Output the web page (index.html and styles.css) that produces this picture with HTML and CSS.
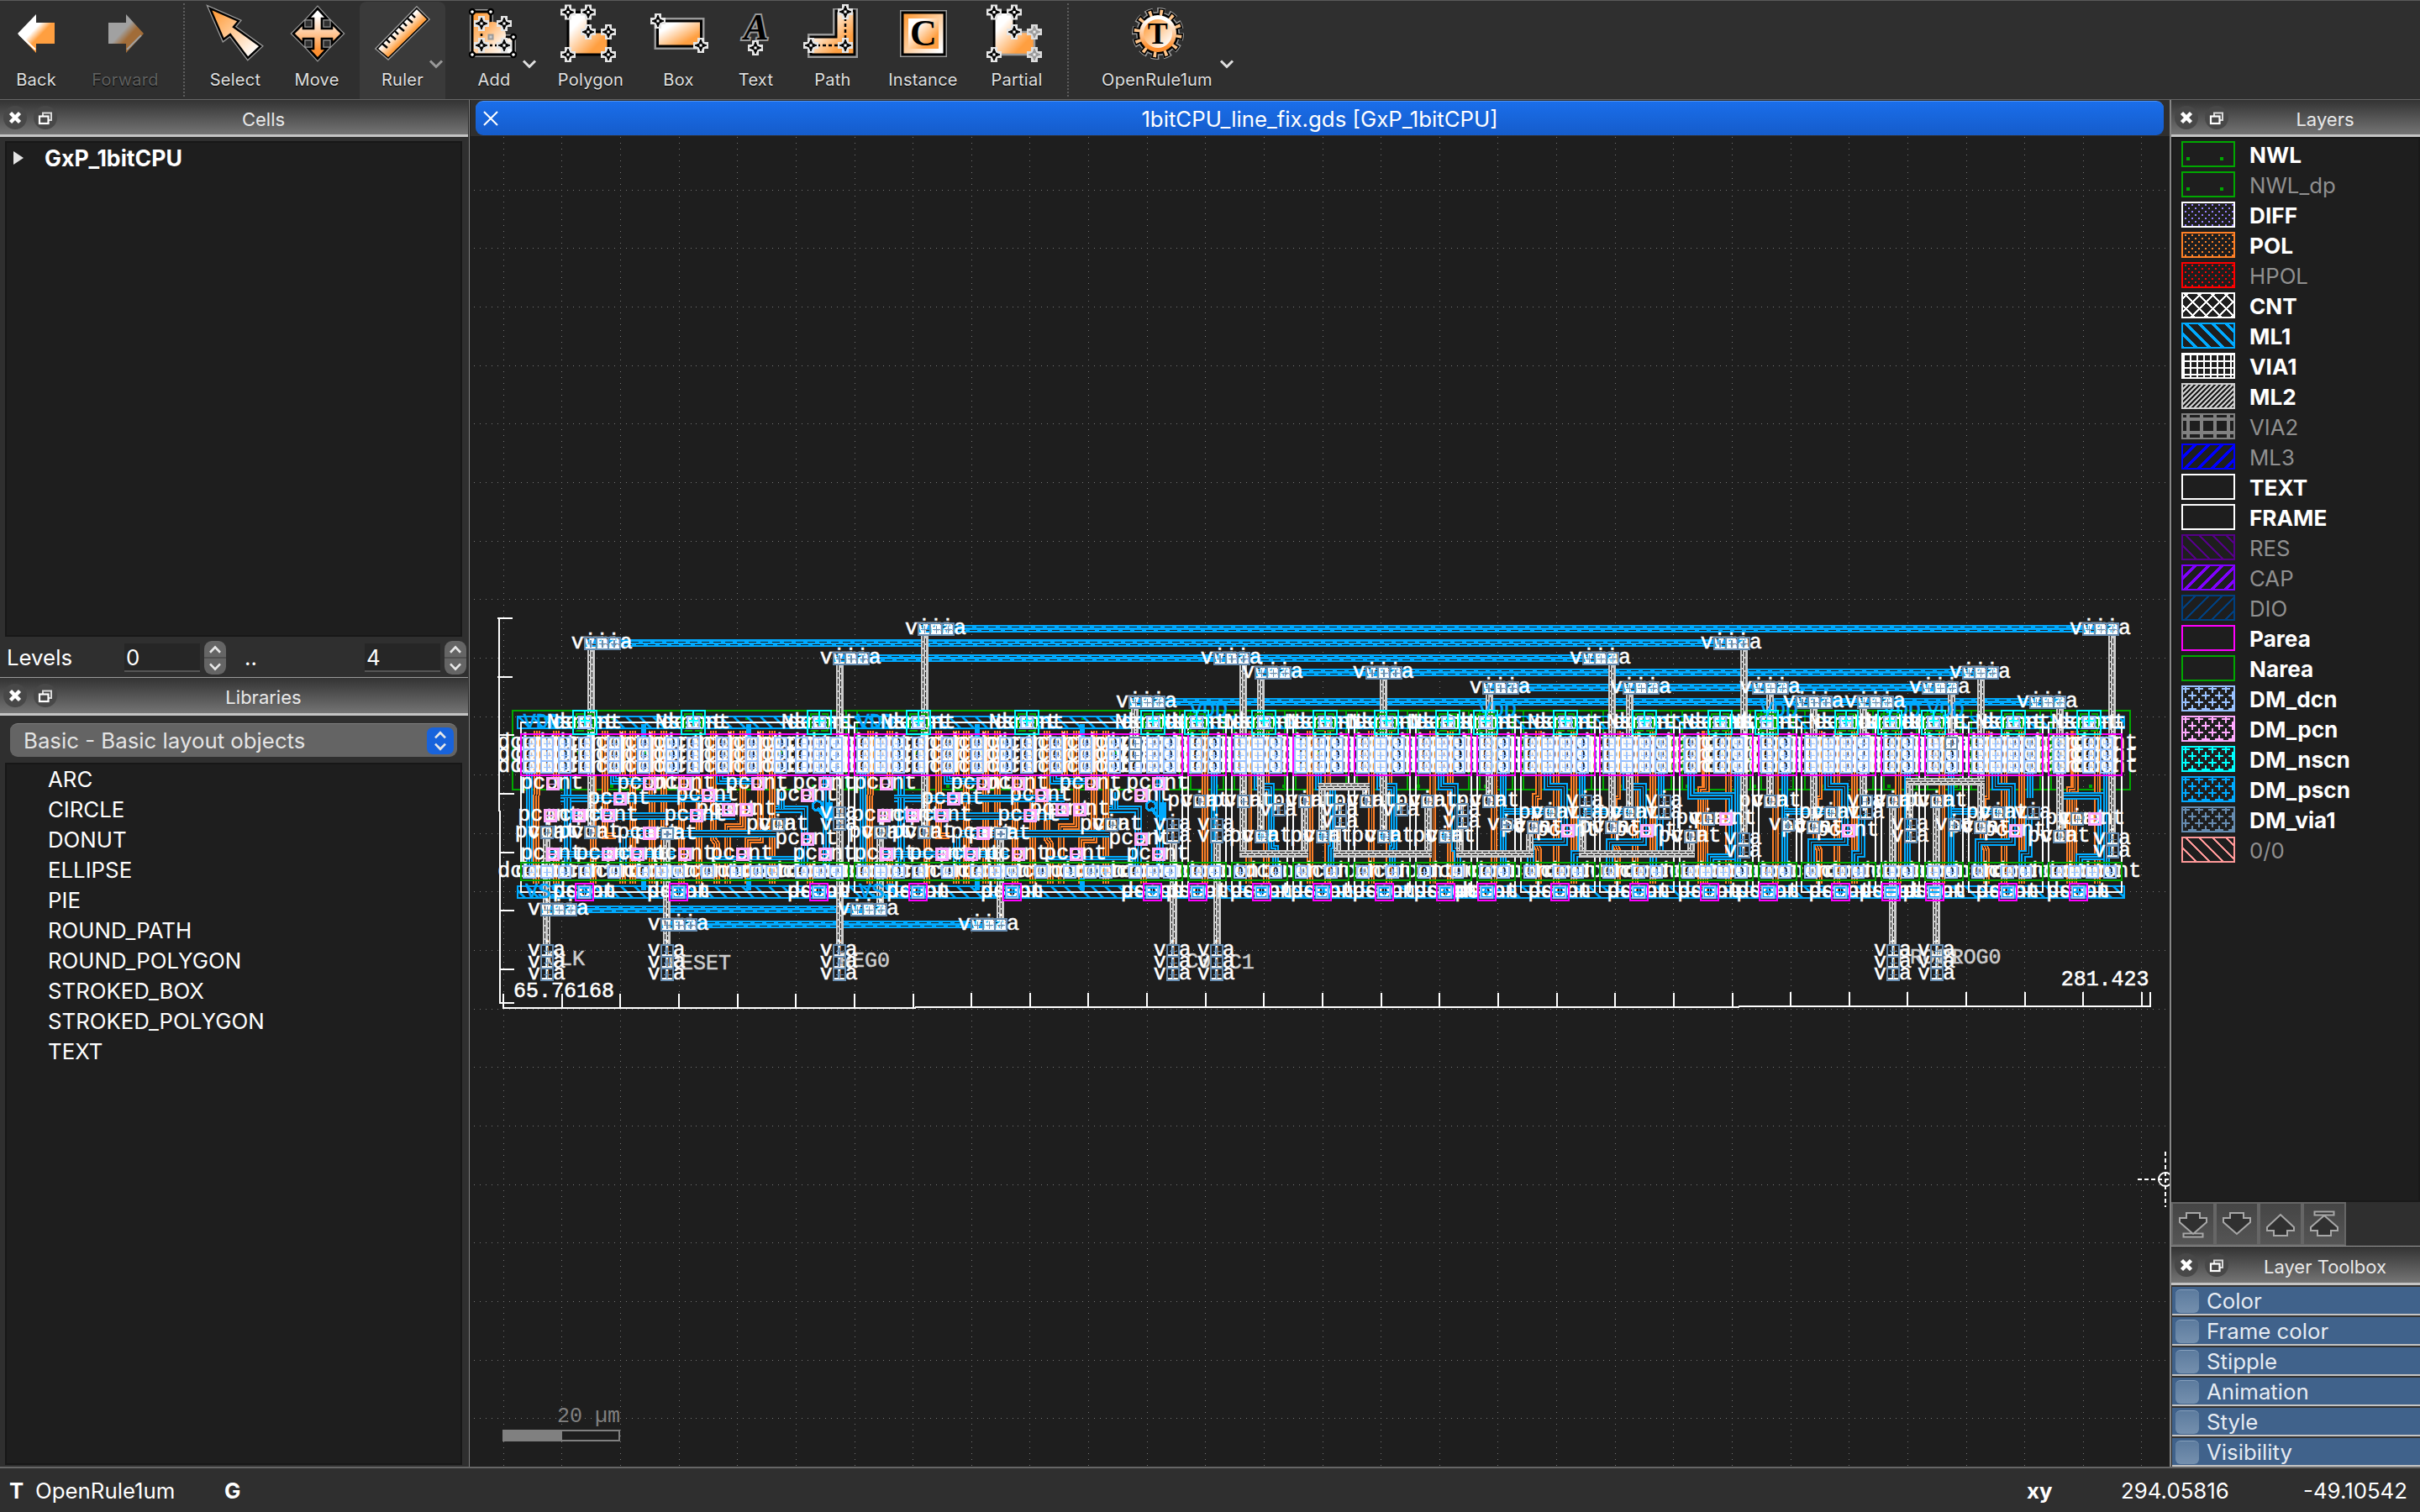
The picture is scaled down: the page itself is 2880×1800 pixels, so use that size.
FILE: index.html
```html
<!DOCTYPE html>
<html lang="en">
<head>
<meta charset="utf-8">
<title>1bitCPU_line_fix.gds</title>
<link rel="stylesheet" href="styles.css">
</head>
<body>
<svg class="defs" width="0" height="0">
  <defs>
    <linearGradient id="gd" x1="0" y1="0" x2="1" y2="1"><stop offset=".25" stop-color="#fff"/><stop offset=".75" stop-color="#ff9f40"/></linearGradient>
    <linearGradient id="gr" x1="0" y1="0" x2="1" y2="1"><stop offset=".1" stop-color="#ff9f40"/><stop offset=".9" stop-color="#fff"/></linearGradient>
    <linearGradient id="gv" x1="0" y1="0" x2="0" y2="1"><stop offset=".15" stop-color="#fff"/><stop offset=".85" stop-color="#ff9030"/></linearGradient>
    <linearGradient id="gh" x1=".3" y1=".3" x2=".7" y2=".7"><stop offset=".3" stop-color="#fff"/><stop offset=".7" stop-color="#ff9f40"/></linearGradient>
    <g id="star"><path d="M-4-9H4V-4H9V4H4V9H-4V4H-9V-4H-4Z" fill="#e6e6e6"/><path d="M0-7L2-2L7 0L2 2L0 7L-2 2L-7 0L-2-2Z" fill="#000" stroke="#000"/><rect x="-1.5" y="-1.5" width="3" height="3" fill="#fff"/></g>
    <g id="stard"><path d="M-4-9H4V-4H9V4H4V9H-4V4H-9V-4H-4Z" fill="#ddd"/><path d="M0-7L2-2L7 0L2 2L0 7L-2 2L-7 0L-2-2Z" fill="#999" stroke="#999"/><rect x="-1.5" y="-1.5" width="3" height="3" fill="#eee"/></g>
    <g id="node"><circle r="3" fill="#fff" stroke="#000" stroke-width="2.4"/></g>
    <g id="dockbtns"><circle cx="14" cy="14" r="14" fill="#484848"/><path d="M8.500 8.500L19.500 19.500M19.500 8.500L8.500 19.500" stroke="#fff" stroke-width="4.500"/><circle cx="50" cy="14" r="14" fill="#484848"/><path d="M47 12V8.500H57V17H54" stroke="#d8d8d8" stroke-width="2" fill="none"/><rect x="43" y="12.500" width="10.500" height="8.500" fill="none" stroke="#fff" stroke-width="2.200"/></g>
  </defs>
</svg>
<div class="app">
  <header class="toolbar">
    <div class="tool w86"><svg class="icon" viewBox="0 0 64 64"><path d="M54 19V44H32V55L10 32L32 9V19Z" fill="url(#gh)"/><path d="M12 33L31 51" stroke="#fff" stroke-width="2"/></svg><span>Back</span></div>
    <div class="tool w126 off"><svg class="icon" viewBox="0 0 64 64"><path d="M12 19V44H33V55L54 32L33 9V19Z" fill="url(#gh)"/><path d="M51 34L34 51" stroke="#fff" stroke-width="2"/></svg><span>Forward</span></div>
    <i class="sep first"></i>
    <div class="tool w96"><svg class="icon" viewBox="0 0 64 64"><path d="M2 2L36 17L30 24L62 47L47 61L26 33L18 39Z" fill="url(#gr)" stroke="#999" stroke-width="5"/><path d="M2 2L36 17L30 24L62 47L47 61L26 33L18 39Z" fill="url(#gr)" stroke="#000" stroke-width="2.400"/></svg><span>Select</span></div>
    <div class="tool w98"><svg class="icon" viewBox="0 0 64 64"><path d="M33 2L44 14H38V26H50V20L62 32L50 44V38H38V50H44L33 62L22 50H28V38H16V44L4 32L16 20V26H28V14H22Z" fill="url(#gv)" stroke="#999" stroke-width="5"/><path d="M33 2L44 14H38V26H50V20L62 32L50 44V38H38V50H44L33 62L22 50H28V38H16V44L4 32L16 20V26H28V14H22Z" fill="url(#gv)" stroke="#000" stroke-width="2.600"/></svg><span>Move</span></div>
    <div class="tool ruler"><svg class="icon" viewBox="0 0 64 64"><path d="M49 1L63 15L15 62L1 50Z" fill="url(#gh)" stroke="#999" stroke-width="3"/><path d="M49 2L62 15L15 61L2 50Z" fill="url(#gh)" stroke="#000" stroke-width="1.600"/><path d="M8 44l6 5M13 39l4 4M18 34l6 5M23 29l4 4M28 24l6 5M33 19l4 4M38 14l6 5M43 9l4 4" stroke="#000" stroke-width="2.400"/></svg><span>Ruler</span><svg class="chev dim" viewBox="0 0 18 10"><path d="M2 1L9 8L16 1"/></svg></div>
    <div class="tool w116"><svg class="icon" viewBox="0 0 64 64"><path d="M6 6H28V36H55V57H6Z" fill="url(#gr)" stroke="#999" stroke-width="6"/><path d="M6 6H28V36H55V57H6Z" fill="url(#gr)" stroke="#000" stroke-width="3"/><circle cx="30" cy="34" r="16" fill="url(#gr)"/><path d="M17 20V46H44" stroke="#000" stroke-width="2.500" stroke-dasharray="3 3" fill="none"/><rect x="25.500" y="33.500" width="5" height="5" fill="#ccc" stroke="#999" stroke-width="2"/><use href="#node" x="6" y="6"/><use href="#node" x="28" y="6"/><use href="#node" x="55" y="36"/><use href="#node" x="6" y="57"/><use href="#node" x="55" y="57"/><use href="#star" x="17" y="20"/><use href="#star" x="44" y="20"/><use href="#star" x="17" y="46"/><use href="#star" x="44" y="46"/></svg><span>Add</span><svg class="chev" viewBox="0 0 18 10"><path d="M2 1L9 8L16 1"/></svg></div>
    <div class="tool w114"><svg class="icon" viewBox="0 0 64 64"><path d="M5 6.500H29V30H53V57H5Z" fill="url(#gd)" stroke="#000" stroke-width="3"/><use href="#star" x="5" y="6.500"/><use href="#star" x="29" y="6.500"/><use href="#star" x="29" y="30"/><use href="#star" x="53" y="30"/><use href="#star" x="5" y="57"/><use href="#star" x="53" y="57"/></svg><span>Polygon</span></div>
    <div class="tool w95"><svg class="icon" viewBox="0 0 64 64"><rect x="6.500" y="17" width="52" height="30" stroke="#999" stroke-width="8"/><rect x="6.500" y="17" width="52" height="30" fill="url(#gd)" stroke="#000" stroke-width="3"/><use href="#star" x="7" y="17"/><use href="#star" x="58" y="46"/></svg><span>Box</span></div>
    <div class="tool w89"><svg class="icon" viewBox="0 0 64 64"><text x="32" y="39" class="glyph ital">A</text><use href="#star" x="31" y="49"/></svg><span>Text</span></div>
    <div class="tool w94"><svg class="icon" viewBox="0 0 64 64"><path d="M5 35H35V5H59V58H5Z" stroke="#999" stroke-width="6"/><path d="M6 36H36V5H58V57H6Z" fill="url(#gd)" stroke="#000" stroke-width="3"/><path d="M6 46H47V6" stroke="#000" stroke-width="2.500" stroke-dasharray="4 3" fill="none"/><use href="#star" x="6" y="46"/><use href="#star" x="47" y="46"/><use href="#star" x="47" y="6"/></svg><span>Path</span></div>
    <div class="tool w121"><svg class="icon" viewBox="0 0 64 64"><rect x="5" y="5" width="54" height="54" fill="url(#gr)" stroke="#999" stroke-width="2"/><rect x="7" y="7" width="50" height="50" fill="url(#gr)" stroke="#000" stroke-width="3"/><rect x="14" y="14" width="36" height="36" fill="url(#gd)"/><text x="32" y="46" class="glyph big">C</text></svg><span>Instance</span></div>
    <div class="tool w102"><svg class="icon" viewBox="0 0 64 64"><path d="M5 6.500H29V30H53V57H5Z" fill="url(#gd)" stroke="#999" stroke-width="2.500"/><path d="M29 30V6.500H5V57" fill="none" stroke="#000" stroke-width="3"/><use href="#star" x="5" y="6.500"/><use href="#star" x="29" y="6.500"/><use href="#star" x="29" y="30"/><use href="#stard" x="53" y="30"/><use href="#star" x="5" y="57"/><use href="#stard" x="53" y="57"/></svg><span>Partial</span></div>
    <i class="sep second"></i>
    <div class="tool w166"><svg class="icon" viewBox="0 0 64 64"><circle cx="33" cy="32" r="26.500" fill="none" stroke="#999" stroke-width="9" stroke-dasharray="9 4.875" stroke-dashoffset="1.600"/><circle cx="33" cy="32" r="23" fill="#999" stroke="#999" stroke-width="6"/><circle cx="33" cy="32" r="26" fill="none" stroke="#000" stroke-width="8" stroke-dasharray="7 6.614"/><circle cx="33" cy="32" r="23" fill="#000" stroke="#000" stroke-width="3"/><circle cx="33" cy="32" r="25" fill="none" stroke="#ffc489" stroke-width="7" stroke-dasharray="3.500 9.590" stroke-dashoffset="-1.600"/><circle cx="33" cy="32" r="22" fill="url(#gv)"/><circle cx="33" cy="32" r="17" fill="url(#gr)"/><text x="33" y="44" class="glyph tee">T</text></svg><span>OpenRule1um</span><svg class="chev far" viewBox="0 0 18 10"><path d="M2 1L9 8L16 1"/></svg></div>
  </header>
  <main class="work">
    <aside class="left">
      <div class="dock"><svg class="btns" viewBox="0 0 64 28"><use href="#dockbtns"/></svg><span>Cells</span></div>
      <div class="tree"><svg width="12" height="18" viewBox="0 0 12 18"><path d="M0 1L12 9L0 17Z" fill="#e4e4e4"/></svg><b>GxP_1bitCPU</b></div>
      <div class="levels"><span class="lv">Levels</span><span class="field">0</span><svg class="step" viewBox="0 0 26 38" preserveAspectRatio="none"><rect width="26" height="38" rx="9" fill="#656565"/><path d="M0 19H26" stroke="#4c4c4c" stroke-width="1.500"/><path d="M7 13L13 7L19 13M7 26L13 32L19 26" class="arr"/></svg><span class="dots">..</span><span class="field">4</span><svg class="step" viewBox="0 0 26 38" preserveAspectRatio="none"><rect width="26" height="38" rx="9" fill="#656565"/><path d="M0 19H26" stroke="#4c4c4c" stroke-width="1.500"/><path d="M7 13L13 7L19 13M7 26L13 32L19 26" class="arr"/></svg></div>
      <div class="dock low"><svg class="btns" viewBox="0 0 64 28"><use href="#dockbtns"/></svg><span>Libraries</span></div>
      <div class="combo"><span>Basic - Basic layout objects</span><svg width="32" height="32" viewBox="0 0 32 31" preserveAspectRatio="none"><rect width="32" height="31" rx="7" fill="#1863dc"/><path d="M10 12L16 6L22 12M10 19L16 25L22 19" class="arr"/></svg></div>
      <ul class="lib"><li>ARC</li><li>CIRCLE</li><li>DONUT</li><li>ELLIPSE</li><li>PIE</li><li>ROUND_PATH</li><li>ROUND_POLYGON</li><li>STROKED_BOX</li><li>STROKED_POLYGON</li><li>TEXT</li></ul>
    </aside>
    <section class="view">
      <div class="tabs"><div class="tab"><svg width="18" height="18" viewBox="0 0 18 18"><path d="M1 1L17 17M17 1L1 17" stroke="#fff" stroke-width="2"/></svg><span>1bitCPU_line_fix.gds [GxP_1bitCPU]</span></div></div>
      <svg class="canvas" id="canvas" width="2022" height="1583" viewBox="0 0 2022 1583"></svg>
    </section>
    <aside class="right">
      <div class="dock"><svg class="btns" viewBox="0 0 64 28"><use href="#dockbtns"/></svg><span>Layers</span></div>
      <ul class="layers" id="layers"></ul>
      <div class="order">
        <button><svg viewBox="0 0 48 48"><path d="M16 11H32V17H40V22L24 36L8 22V17H16ZM12.500 35.500H35.500V39.500H12.500Z"/></svg></button>
        <button><svg viewBox="0 0 48 48"><path d="M16 11H32V17H40V22L24 36L8 22V17H16Z"/></svg></button>
        <button><svg viewBox="0 0 48 48"><path d="M16 38H32V32H40V28L24 13L8 28V32H16Z"/></svg></button>
        <button><svg viewBox="0 0 48 48"><path d="M16 38H32V32H40V28L24 14L8 28V32H16ZM12.500 9.500H35.500V13.500H12.500Z"/></svg></button>
      </div>
      <div class="dock box"><svg class="btns" viewBox="0 0 64 28"><use href="#dockbtns"/></svg><span>Layer Toolbox</span></div>
      <ul class="kit"><li><i></i>Color</li><li><i></i>Frame color</li><li><i></i>Stipple</li><li><i></i>Animation</li><li><i></i>Style</li><li><i></i>Visibility</li></ul>
    </aside>
  </main>
  <footer class="status"><b class="t">T</b><span class="tech">OpenRule1um</span><b>G</b><b class="xy">xy</b><span class="cx">294.05816</span><span class="cy">-49.10542</span></footer>
</div>
<script src="layout.js"></script>
</body>
</html>
```

FILE: styles.css
```css
* { box-sizing: border-box; }
body { margin: 0; background: #2f2f2f; font-family: Inter, "Liberation Sans", sans-serif; font-size: 25.8px; color: #fff; }
ul { list-style: none; margin: 0; padding: 0; }
.defs { position: absolute; }
.app { width: 2880px; height: 1800px; display: flex; flex-direction: column; overflow: hidden; }

.toolbar { height: 119px; flex: none; display: flex; border-top: 1px solid #5a5a5a; border-bottom: 1px solid #666; background: #2f2f2f; }
.tool { position: relative; display: flex; flex-direction: column; align-items: center; padding-top: 7px; font-size: 20px; line-height: 24px; letter-spacing: .25px; color: #e0e0e0; }
.tool span { margin-top: 11px; text-shadow: 0 1px 1px #000; }
.icon { width: 64px; height: 64px; overflow: visible; }
.off { color: #606060; }
.off .icon { opacity: .55; }
.w86 { width: 86px; } .w126 { width: 126px; } .w96 { width: 96px; } .w98 { width: 98px; }
.w116 { width: 116px; } .w114 { width: 114px; } .w95 { width: 95px; } .w89 { width: 89px; }
.w94 { width: 94px; } .w121 { width: 121px; } .w102 { width: 102px; } .w166 { width: 166px; }
.ruler { width: 102px; margin: 1px 0 0 2px; padding-top: 6px; background: #3a3a3a; border-radius: 8px 8px 0 0; }
.sep { width: 0; margin: 3px 0; border-left: 2px dotted #5c5c5c; }
.first { margin-left: 6px; margin-right: 12px; }
.second { margin-left: 9px; margin-right: 22px; }
.chev { position: absolute; right: 7px; top: 70px; width: 18px; height: 11px; fill: none; stroke: #e0e0e0; stroke-width: 3; }
.chev.dim { stroke: #999; right: 2px; top: 69px; }
.chev.far { right: -9px; }
.glyph { font-family: "Liberation Serif", serif; font-weight: bold; text-anchor: middle; fill: #000; }
.ital { font-size: 44px; font-style: italic; stroke: #999; stroke-width: 4; paint-order: stroke; }
.big { font-size: 44px; }
.tee { font-size: 36px; }

.work { flex: 1; display: flex; min-height: 0; }
.left { width: 560px; display: flex; flex-direction: column; background: #2f2f2f; border-right: 1px solid #1e1e1e; box-shadow: inset -1px 0 #808080; }
.dock { position: relative; height: 44px; flex: none; margin-right: 2px; display: flex; align-items: center; background: linear-gradient(#333, #747474); border-bottom: 3px solid #c4c4c4; font-size: 22px; color: #e8e8e8; }
.dock span { flex: 1; text-align: center; padding-top: 4px; padding-left: 2px; }
.btns { width: 64px; height: 28px; margin-left: 4px; flex: none; }
.tree { height: 590px; margin: 5px 9px 0 6px; padding: 6px 8px; display: flex; align-items: flex-start; gap: 25px; background: #1e1e1e; border: 2px solid #171717; font-size: 26.6px; line-height: 24px; }
.tree svg { margin-top: 3px; }
.levels { height: 48px; display: flex; align-items: center; padding: 1px 0 0 8px; }
.lv { width: 140px; }
.field { width: 90px; height: 34px; padding-left: 2px; line-height: 33px; background: #262626; border-bottom: 2px solid #555; }
.step { width: 26px; height: 40px; margin-left: 5px; }
.arr { fill: none; stroke: #e8e8e8; stroke-width: 2.6; }
.dots { width: 143px; margin-left: 22px; }
.low { height: 46px; border-top: 1px solid #999; }
.combo { height: 40px; margin: 9px 15px 7px 12px; padding: 0 4px 0 16px; display: flex; align-items: center; justify-content: space-between; background: #646464; border-radius: 9px; border-top: 1px solid #808080; color: #e4e4e4; }
.lib { flex: 1; margin: 0 9px 2px 6px; padding: 0 49px; background: #1e1e1e; border: 2px solid #171717; line-height: 36px; }

.view { width: 2022px; display: flex; flex-direction: column; background: #1e1e1e; }
.tabs { height: 43px; padding: 1px 7px 1px 6px; background: #2f2f2f; }
.tab { height: 41px; padding-left: 9px; display: flex; align-items: center; background: linear-gradient(#1a6eea, #155ccb); border-radius: 9px; border-top: 1px solid #4b92f5; }
.tab span { flex: 1; text-align: center; padding: 1px 27px 0 0; }
.canvas { display: block; font-family: "Liberation Mono", monospace; font-size: 75px; }
.shapes { shape-rendering: crispEdges; }

.right { width: 298px; display: flex; flex-direction: column; background: #2f2f2f; border-left: 2px solid #868686; }
.right .dock { margin-right: 0; }
.layers { flex: 1; padding: 1px 0 0 10px; background: #1e1e1e; border: 2px solid #191919; }
.layers li { height: 36px; display: flex; align-items: center; gap: 17px; color: #909090; }
.layers li.on { color: #fff; font-weight: 700; font-size: 26.2px; }
.layers svg { display: block; margin-top: -1px; }
.order { height: 53px; display: flex; border-bottom: 1px solid #999; }
.order button { width: 52px; height: 52px; padding: 0; border: 2px solid #666; background: linear-gradient(#454545, #555); }
.order svg { display: block; width: 48px; height: 48px; fill: #303030; stroke: #a8a8a8; stroke-width: 2; }
.right .box { height: 46px; }
.kit li { height: 36px; display: flex; align-items: center; gap: 9px; padding: 1px 0 0 4px; margin-left: 1px; background: #40628b; border-top: 2px solid #333; border-bottom: 2px solid #c4c4c4; color: #e6ebf2; }
.kit i { width: 28px; height: 28px; border-radius: 6px; background: linear-gradient(#5c7b9e, #7590ae); border-top: 1px solid #87a0bc; }

.status { height: 54px; flex: none; display: flex; align-items: center; padding: 1px 15px 0 11px; border-top: 2px solid #666; background: #2f2f2f; }
.t { width: 31px; }
.tech { width: 225px; }
.xy { margin-left: auto; width: 112px; }
.cx { width: 217px; }
```

FILE: layout.js
```js
// Draws the mask layout view and the layer list.
const C = { bg: '#1e1e1e', ml1: '#00aaff', ml2: '#cccccc', pol: '#ff8026', well: '#00a800', par: '#ff00ff',
  dcn: '#99c2ff', pcn: '#ffaaff', nsc: '#00ffff', via: '#668cb0' };

const rect = (x, y, w, h, s, f = 'none', sw = 6) =>
  `<rect x="${x + sw / 2}" y="${y + sw / 2}" width="${w - sw}" height="${h - sw}" stroke="${s}" stroke-width="${sw}" fill="${f}"/>`;
const fill = (x, y, w, h, f) => `<rect x="${x}" y="${y}" width="${w}" height="${h}" fill="${f}"/>`;
const line = (x1, y1, x2, y2, s, sw = 6, dash = '') =>
  `<path d="M${x1} ${y1}L${x2} ${y2}" stroke="${s}" stroke-width="${sw}" ${dash ? `stroke-dasharray="${dash}"` : ''}/>`;
const label = (x, y, t, c = '#fff') => `<text x="${x}" y="${y}" fill="${c}" stroke="${c}" stroke-width="1.6">${t}</text>`;

// Cells: [left, right, top contacts, bottom contacts, n-tap x, p-tap x]
const ffTop = [180, 243, 306, 378, 484, 588, 690, 765, 870, 975, 1077, 1152, 1215, 1275];
const ffBot = [180, 243, 306, 378, 484, 585, 651, 711, 816, 918, 990, 1047, 1152, 1215, 1275];
const shift = (a, d) => a.map(v => v + d);
const gates = [
  [2532, 2667, [2560, 2625], [2562, 2625], [2518], [2532]],
  [2688, 2886, [2718, 2781, 2844], [2718, 2844], [2758], [2760]],
  [2907, 3105, [2934, 3000, 3063], [2937, 3042], [2977], [2977]],
  [3126, 3324, [3156, 3219, 3282], [3156, 3261], [3196], [3198]],
  [3345, 3543, [3375, 3438, 3500], [3375, 3494], [3415], [3417]],
  [3564, 3699, [3594, 3657], [3594, 3657], [3550], [3564]],
  [3720, 3985, [3753, 3816, 3879, 3939], [3753, 3858, 3921], [3835], [3825]],
  [4002, 4267, [4035, 4098, 4161, 4221], [4035, 4140, 4203], [4117], [4107]],
  [4287, 4548, [4326, 4431, 4494], [4317, 4380, 4443, 4506], [4387], [4359]],
  [4569, 4704, [4599, 4662], [4599, 4662], [4554], [4569]],
  [4722, 4987, [4755, 4818, 4881, 4941], [4755, 4860, 4923], [4838], [4827]],
  [5007, 5142, [5037, 5100], [5037, 5100], [4993], [5007]],
  [5163, 5298, [5193, 5256], [5193, 5256], [5149], [5163]],
  [5319, 5583, [5352, 5415, 5478, 5538], [5352, 5457, 5520], [5434], [5424]],
  [5604, 5865, [5643, 5748, 5811], [5634, 5697, 5760, 5823], [5704], [5676]],
];
const cells = [
  [150, 1320, ffTop, ffBot, [334, 721, 1171], [343, 679, 1180]],
  [1341, 2511, shift(ffTop, 1191), shift(ffBot, 1191), [1525, 1912, 2362], [1534, 1870, 2371]],
  ...gates,
];

const viaRows = [[375, 144], [1263, 198], [1567, 93], [2320, 354], [2622, 198], [2770, 249], [3165, 249], [3582, 303],
  [3940, 198], [4084, 303], [4407, 144], [4546, 303], [4701, 354], [4921, 354], [5152, 303], [5296, 249], [5536, 354],
  [5725, 93], [220, 1095], [648, 1149], [1327, 1095], [1756, 1149]];
const wires = [[1567, 5855, 102], [375, 4530, 154], [1263, 4060, 207], [2770, 5420, 258], [3582, 5280, 312],
  [2320, 5660, 363], [220, 1457, 1104], [648, 1886, 1158]];

const pcFF = [[240, 646], [585, 646], [711, 646], [972, 646], [1212, 646], [480, 699], [795, 687], [1149, 687], [867, 738],
  [930, 738], [231, 759], [333, 759], [438, 759], [753, 759], [585, 823], [1149, 843], [240, 897], [438, 897], [543, 897],
  [711, 897], [918, 897], [1212, 897]];
const pc = [...pcFF, ...pcFF.map(([x, y]) => [x + 1191, y]), [3865, 813], [4146, 813], [4428, 771], [4866, 813], [5463, 813], [5745, 771]];
// Vias sitting on a poly contact
const viaPc = [[220, 820], [375, 820], [648, 824], [1045, 792], [1411, 820], [1566, 820], [1839, 824], [2236, 792],
  [2550, 708], [2706, 708], [2925, 708], [2770, 834], [2988, 834], [3144, 708], [3364, 708], [3582, 708], [3207, 834],
  [3426, 834], [3740, 801], [3802, 750], [4020, 801], [4084, 750], [4302, 834], [4365, 771], [4588, 708], [4741, 801],
  [4804, 750], [5026, 708], [5182, 708], [5338, 801], [5401, 750], [5620, 834], [5683, 771]];
const viaOnly = [[1263, 750], [1263, 791], [2320, 501], [2320, 543], [2454, 791], [2454, 834], [2610, 791], [2610, 834],
  [2832, 739], [3052, 739], [3052, 783], [3270, 739], [3488, 739], [3488, 783], [3645, 791], [3927, 708], [3927, 750],
  [4209, 708], [4209, 750], [4491, 843], [4491, 888], [4650, 792], [4930, 708], [4930, 750], [5088, 792], [5088, 834],
  [5244, 792], [5526, 750], [5809, 843], [5809, 888], [5232, 501]];
for (const x of [220, 648, 1263, 2454, 2610, 5026, 5182]) for (const y of [1242, 1284, 1326]) viaOnly.push([x, y]);

const ml2v = [[400, 190, 820], [1288, 245, 1245], [242, 867, 1245], [670, 870, 1245], [1432, 867, 1100], [1591, 140, 820],
  [2341, 400, 500], [2728, 245, 920], [2791, 295, 835], [1861, 870, 1150], [2479, 880, 1245], [2635, 880, 1245],
  [2949, 755, 920], [3010, 680, 835], [3167, 680, 710], [3229, 295, 835], [3607, 350, 710], [3065, 830, 920],
  [3388, 755, 920], [3502, 830, 920], [3752, 848, 920], [4045, 245, 800], [4108, 350, 750], [3940, 797, 920],
  [4327, 880, 920], [4516, 190, 845], [4610, 350, 710], [4765, 400, 800], [4942, 400, 710], [5258, 350, 500],
  [5363, 295, 800], [5108, 660, 795], [5047, 755, 1245], [5203, 755, 1245], [5644, 400, 835], [5830, 140, 845]];
const ml2h = [[2715, 2960, 906], [2997, 3180, 666], [3052, 3401, 906], [3490, 3765, 906], [3927, 4340, 906], [5095, 5375, 648]];

const polFF = ['M208 480V700L205 712V1025', 'M277 480V650', 'M451 480V855H490', 'M514 480V640', 'M408 640V1025', 'M550 480V1025',
  'M619 480V1025', 'M661 480V1025', 'M724 640V1025', 'M787 640V1025', 'M838 480V868L850 885V1025', 'M901 480V640',
  'M943 480V822H887V1025', 'M1006 480V870H960V1025', 'M1048 480V1025', 'M514 930V1025', 'M277 930V1025', 'M1182 950V1025'];
const ml1FF = ['M180 620V960', 'M316 640V965', 'M480 640V660H600', 'M292 721H900', 'M300 785H915', 'M530 848H1060', 'M515 848V960',
  'M860 640V660H985', 'M1060 760H1163V940H830', 'M240 921H700', 'M1240 640V965', 'M1152 900V965', 'M1080 700V760', 'M316 721V800'];

let g = '';
// Wire drawn as two edges with a thin core line
const bus = (d, c, w = 24) => `<path d="${d}" fill="none" stroke="${c}" stroke-width="${w}"/><path d="${d}" fill="none" stroke="${C.bg}" stroke-width="${w - 12}"/><path d="${d}" fill="none" stroke="${c}" stroke-width="5"/>`;

// Wells and rails
for (const [l, r] of cells) g += rect(l - 33, 405, r - l + 66, 287, C.well);
for (let x = 230; x < 5640; x += 240) g += fill(x, 432, 12, 10, C.well) + fill(x + 120, 552, 12, 12, C.well) + fill(x + 238, 672, 12, 12, C.well);
for (const y of [427, 1033]) g += rect(136, y, 5741, 46, C.ml1, 'url(#hatch)');

for (const dx of [0, 1191]) g += `<g transform="translate(${dx} 0)">` + polFF.map(d => bus(d, C.pol)).join('') + ml1FF.map(d => bus(d, C.ml1, 26)).join('') +
  [588, 963].map(x => line(x, 455, x, 500, C.ml1, 20) + line(x, 1005, x, 1050, C.ml1, 20)).join('') +
  `<circle cx="1208" cy="748" r="17" fill="none" stroke="${C.ml1}" stroke-width="9"/>` + line(1208, 755, 1235, 790, C.ml1, 12) + line(1250, 735, 1250, 800, C.ml1, 28) + '</g>';
for (const [l, r, top, bot] of gates) {
  const n = top.length;
  for (let i = 0; i < n - 1; i++) {
    const m = (top[i] + top[i + 1]) / 2;
    g += bus(n > 3 && i === 0 ? `M${m} 480V715H${m - 12}V880L${m} 910V1025` : `M${m} 480V1025`, C.pol);
  }
  if (n === 3 && r - l > 220) g += bus(`M${l + 95} 480V690H${l + 75}V1025`, C.pol);
  const e = top[n - 1];
  if (n === 2) g += bus(`M${e} 630V965`, C.ml1, 26);
  else if (n === 3 && r - l < 220) g += bus(`M${l + 90} 630V680H${e - 15}V900H${bot[bot.length - 1]}V965`, C.ml1, 26) + bus(`M${l + 80} 855H${e}`, C.ml1, 26);
  else if (n === 3) g += bus(`M${l + 40} 630V712H${e - 20}V930H${l + 110}V965`, C.ml1, 26) + bus(`M${e} 630V965`, C.ml1, 26);
  else g += bus(`M${l + 95} 630V680H${l + 155}V878H${l + 35}V965`, C.ml1, 26) + bus(`M${e} 630V720M${l + 215} 780V920H${l + 190}V965`, C.ml1, 26) + bus(`M${l - 60} 768H${l + 120}`, C.ml1, 26);
}
for (const [l, r] of cells) g += rect(l - 3, 448, r - l + 6, 611, '#fff');

for (const [x1, x2, y] of wires) g += fill(x1, y, x2 - x1, 27, C.ml1) + line(x1, y + 8.5, x2, y + 8.5, C.bg, 3, '27 15') + line(x1 + 18, y + 19, x2, y + 19, C.bg, 3, '27 15');
for (const [x, y1, y2] of ml2v) g += fill(x - 13.5, y1, 27, y2 - y1, C.ml2) + line(x - 5, y1, x - 5, y2, C.bg, 3, '18 6') + line(x + 5, y1 + 9, x + 5, y2, C.bg, 3, '18 6');
for (const [x1, x2, y] of ml2h) g += fill(x1, y, x2 - x1, 27, C.ml2) + line(x1, y + 9, x2, y + 9, C.bg, 3, '18 6') + line(x1 + 9, y + 18, x2, y + 18, C.bg, 3, '18 6');

// Labels
let t = '';
t += label(243, 1318, 'CLK', C.ml2) + label(675, 1333, 'RESET', C.ml2) + label(1287, 1324, 'REG0', C.ml2) + label(2524, 1325, 'C0', C.ml2) +
  label(2678, 1328, 'C1', C.ml2) + label(5064, 1310, 'PROG1', C.ml2) + label(5210, 1310, 'PROG0', C.ml2);
for (const x of [2538, 3570, 4575, 5013, 5169]) t += label(x, 430, 'VDD', C.ml1);
for (const x of [158, 1349]) t += label(x, 470, 'VDD', C.ml1) + label(x + 8, 1078, 'VSS', C.ml1);
for (const [, , top, bot, nt, pt] of cells) {
  for (const x of top) for (const y of [544, 586, 628]) t += label(x - 113, y, 'dcont');
  for (const x of bot) t += label(x - 113, 1003, 'dcont');
  for (const x of nt) t += label(x - 92, 470, 'Nscont') + label(x - 70, 470, 'dcont');
  for (const x of pt) t += label(x - 78, 1075, 'dcont') + label(x - 80, 1075, 'pscon');
}
for (const [x, y] of [...pc, ...viaPc]) t += label(x - 92, y + 42, 'pcont');
for (const [x, y] of [...viaPc, ...viaOnly]) t += label(x - 46, y + 43, 'via');
for (const [x, y] of viaRows) for (const d of [0, 42, 84]) t += label(x - 46 + d, y + 43, 'via');

// Contact frames above the labels
let f = '';
const cut = (x, y, c) => rect(x, y, 47, 47, c) + line(x + 11, y + 25, x + 38, y + 25, c, 4) + line(x + 24, y + 12, x + 24, y + 38, c, 4);
for (const [, , top, bot] of cells) {
  for (const x of top) for (const y of [501, 543, 585]) f += cut(x - 24, y, C.dcn);
  for (const x of bot) f += cut(x - 24, 960, C.dcn);
}
for (const [x, y] of pc) f += rect(x, y, 47, 47, C.pcn, 'none', 8) + line(x + 10, y + 24, x + 37, y + 24, C.pcn, 4);
for (const [l, r, , , nt, pt] of cells) {
  f += rect(l - 3, 490, r - l + 6, 151, C.par) + rect(l - 3, 948, r - l + 6, 68, C.well);
  for (const x of nt) f += `<rect x="${x + 14}" y="421" width="60" height="60" fill="none" stroke="${C.well}" stroke-width="7" stroke-dasharray="30 8"/>` +
    cut(x + 20, 426, C.dcn) + rect(x, 405, 88, 90, C.nsc) + line(x + 28, 445, x + 62, 445, C.nsc, 5) + line(x + 44, 408, x + 44, 462, C.nsc, 5);
  for (const x of pt) f += rect(x + 8, 1034, 52, 46, C.ml1, 'none', 9) + cut(x + 10, 1032, C.dcn) + line(x + 18, 1056, x + 50, 1056, C.ml1, 8) + rect(x - 1, 1023, 69, 65, C.par);
}
for (const [x, y] of [...viaPc, ...viaOnly]) f += cut(x, y, C.via);
for (const [x, y] of viaRows) for (const d of [0, 42, 84]) f += cut(x + d, y, C.via);

// Rulers
let r = line(72, 75, 72, 768, '#fff') + line(75, 766, 75, 1454, '#fff') + line(84, 1470, 1560, 1470, '#fff') +
  line(1558, 1467, 4500, 1467, '#fff') + line(4498, 1464, 5970, 1464, '#fff');
[77, 288, 495, 705, 915, 1122, 1332, 1451].forEach((y, i) => { const x = i < 2 ? 66 : 72; r += line(x, y, x + 53, y, '#fff'); });
for (let i = 0; i < 29; i++) { const x = Math.round(87 + i * 208.93), b = x < 1560 ? 1470 : x < 4500 ? 1467 : 1464; r += line(x, b - 51, x, b, '#fff'); }
r += line(5967, 1413, 5967, 1464, '#fff');

// Dotted grid, in view pixels
let d = '';
const P = 69.635, gx = [], gy = [];
for (let i = 0; i < 29; i++) gx.push(38.7 + i * P);
for (let i = -7; i < 15; i++) gy.push(551.3 + i * P);
for (const x of gx) for (let y = gy[0] - P; y < 1583; y += P / 10) d += `M${Math.round(x)} ${Math.round(y)}h1v1h-1z`;
for (const y of gy) for (let x = 38.7 - P; x < 2022; x += P / 10) if (x > 0) d += `M${Math.round(x)} ${Math.round(y)}h1v1h-1z`;

document.getElementById('canvas').innerHTML =
  `<defs><pattern id="hatch" width="48" height="48" patternUnits="userSpaceOnUse"><path d="M-6 -6L54 54M-6 42L6 54M42 -6L54 6" stroke="${C.ml1}" stroke-width="8"/></pattern></defs>
  <path class="shapes" d="${d}" fill="#757575"/>
  <g transform="translate(10 548) scale(.33333)"><g class="shapes">${g}</g>${t}<g class="shapes">${f}${r}</g>
  ${label(123, 1430, '65.76168')}${label(5648, 1388, '281.423')}</g>
  <text x="103" y="1531" font-size="25" fill="#808080">20 µm</text>
  <g class="shapes"><rect x="39" y="1541" width="138" height="12" fill="none" stroke="#808080" stroke-width="2"/><rect x="38" y="1540" width="71" height="14" fill="#808080"/></g>
  <g fill="none" stroke="#fff" stroke-width="2"><circle cx="2017" cy="1242" r="8"/><path d="M1984 1242H2022M2017 1209V1275" stroke-dasharray="5 3"/></g>`;

// Layer list: name, colour, stipple, visible
const layers = [['NWL', '#00a800', 'dot', 1], ['NWL_dp', '#00a800', 'dot', 0], ['DIFF', '#9580ff', 'fine', 1, '#fff'], ['POL', '#ff8026', 'fine', 1],
  ['HPOL', '#ff0000', 'fine', 0], ['CNT', '#fff', 'cross', 1], ['ML1', '#00aaff', 'back', 1], ['VIA1', '#fff', 'grid', 1], ['ML2', '#ccc', 'tight', 1],
  ['VIA2', '#808080', 'wide', 0], ['ML3', '#0000ff', 'fwd', 0], ['TEXT', '#fff', '', 1], ['FRAME', '#fff', '', 1], ['RES', '#550088', 'backthin', 0],
  ['CAP', '#8000ff', 'fwd', 0], ['DIO', '#004080', 'fwdthin', 0], ['Parea', '#ff00ff', '', 1], ['Narea', '#00a800', '', 1], ['DM_dcn', C.dcn, 'plus', 1],
  ['DM_pcn', C.pcn, 'plus', 1], ['DM_nscn', C.nsc, 'plus', 1], ['DM_pscn', C.ml1, 'plus', 1], ['DM_via1', C.via, 'plus', 1], ['0/0', '#ff9999', 'backthin', 0]];
const diag = (p, sw, dir, off) => {
  let s = '';
  for (let x = -48 + off; x < 112; x += p) s += dir > 0 ? `M${x} 31L${x + 31} 0` : `M${x} 0L${x + 31} 31`;
  return `<path d="${s}" stroke-width="${sw}"/>`;
};
const stipple = {
  '': () => '', dot: () => '<path d="M6 21H10M46 21H50" stroke-width="4"/>',
  fine: () => { let s = ''; for (let j = 0; j < 7; j++) for (let x = j % 2 ? 8 : 4; x < 62; x += 8) s += `M${x} ${4 + j * 4}h2`; return `<path d="${s}" stroke-width="2"/>`; },
  cross: () => diag(16, 2, 1, 10) + diag(16, 2, -1, 2), back: () => diag(16, 3, -1, 4), backthin: () => diag(16, 1.6, -1, 4),
  fwd: () => diag(16, 3.4, 1, 3), fwdthin: () => diag(16, 1.6, 1, 3), tight: () => diag(6, 1.8, 1, 2),
  grid: () => { let s = ''; for (let x = 3; x < 64; x += 8) s += `M${x} 0V31`; for (let y = 2; y < 31; y += 8) s += `M0 ${y}H64`; return `<path d="${s}" stroke-width="2"/>`; },
  wide: () => '<path d="M8 0V31M24 0V31M40 0V31M56 0V31M0 7H64M0 23H64" stroke-width="4"/>',
  plus: () => { let s = ''; for (let j = 0; j < 4; j++) for (let x = j % 2 ? -3 : 5; x < 68; x += 16) s += `M${x - 5} ${4 + j * 8}h10m-5 -5v10`; return `<path d="${s}" stroke-width="2"/>`; },
};
document.getElementById('layers').innerHTML = layers.map(([n, c, p, on, edge]) =>
  `<li class="${on ? 'on' : ''}"><svg class="shapes" width="64" height="31" viewBox="0 0 64 31"><g stroke="${c}" fill="none">${stipple[p]()}</g><rect x="1" y="1" width="62" height="29" fill="none" stroke="${edge || c}" stroke-width="2"/></svg>${n}</li>`).join('');
```
